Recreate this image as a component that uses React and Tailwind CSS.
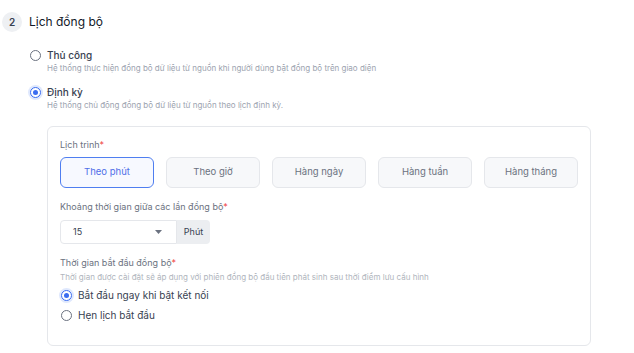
import React from 'react';

function Radio({ checked }) {
    return checked ? (
        <span className="w-[11px] h-[11px] rounded-full border border-[#3b6df0] bg-white flex items-center justify-center shadow-[0_0_0_2px_#dfe8fd] shrink-0">
            <span className="w-[5px] h-[5px] rounded-full bg-[#3b6df0]" />
        </span>
    ) : (
        <span className="w-[11px] h-[11px] rounded-full border border-[#6b7280] bg-white shrink-0" />
    );
}

const schedules = ['Theo phút', 'Theo giờ', 'Hàng ngày', 'Hàng tuần', 'Hàng tháng'];

export default function App() {
    return (
        <div className="w-[634px] h-[353px] bg-white overflow-hidden text-[#1f2937]" style={{ fontFamily: 'Inter, "Open Sans", sans-serif' }}>
            <div className="flex items-center pl-[2px] pt-[12px]">
                <div className="w-5 h-5 rounded-full bg-[#eef0f3] flex items-center justify-center text-[10px] font-semibold text-[#374151]">2</div>
                <div className="ml-[7px] text-[12px] leading-[20px] text-[#111827]">Lịch đồng bộ</div>
            </div>

            <div className="pl-[30px] mt-[17px] flex flex-col gap-[12px]">
                <div>
                    <div className="flex items-center gap-[6px] h-[12px]">
                        <Radio />
                        <span className="text-[10px] leading-[12px] font-medium text-[#374151]">Thủ công</span>
                    </div>
                    <div className="pl-[17px] mt-[1px] text-[8px] leading-[12px] text-[#9ca3af]">Hệ thống thực hiện đồng bộ dữ liệu từ nguồn khi người dùng bật đồng bộ trên giao diện</div>
                </div>
                <div>
                    <div className="flex items-center gap-[6px] h-[12px]">
                        <Radio checked />
                        <span className="text-[10px] leading-[12px] font-medium text-[#374151]">Định kỳ</span>
                    </div>
                    <div className="pl-[17px] mt-[1px] text-[8px] leading-[12px] text-[#9ca3af]">Hệ thống chủ động đồng bộ dữ liệu từ nguồn theo lịch định kỳ.</div>
                </div>
            </div>

            <div className="ml-[47px] mt-[15px] w-[544px] h-[220px] border border-[#e5e7eb] rounded-[6px] px-[12px] pt-[12px]">
                <div className="text-[9px] leading-[12px] text-[#6b7280]">Lịch trình<span className="text-[#ef4444]">*</span></div>
                <div className="mt-[6px] flex gap-[12px]">
                    {schedules.map((s, i) => (
                        <div
                            key={s}
                            className={i === 0
                                ? 'w-[94px] h-[31px] rounded-[6px] border border-[#4f7ef0] bg-[#f7f9ff] flex items-center justify-center text-[9.5px] text-[#4f6ee8]'
                                : 'w-[94px] h-[31px] rounded-[6px] border border-[#e5e7eb] bg-[#f7f8fa] flex items-center justify-center text-[9.5px] text-[#6b7280]'}
                        >
                            {s}
                        </div>
                    ))}
                </div>

                <div className="mt-[13px] text-[9px] leading-[12px] text-[#6b7280]">Khoảng thời gian giữa các lần đồng bộ<span className="text-[#ef4444]">*</span></div>
                <div className="mt-[7px] flex h-[24px] w-[150px]">
                    <div className="w-[117px] border border-[#e5e7eb] rounded-l-[4px] flex items-center justify-between pl-[12px] pr-[14px] text-[9px] text-[#374151]">
                        <span>15</span>
                        <svg width="7" height="4" viewBox="0 0 7 4"><path d="M0 0h7L3.5 4z" fill="#6b7280" /></svg>
                    </div>
                    <div className="w-[33px] bg-[#eceef1] rounded-r-[4px] flex items-center justify-center text-[9px] text-[#374151]">Phút</div>
                </div>

                <div className="mt-[13px] text-[9px] leading-[12px] text-[#6b7280]">Thời gian bắt đầu đồng bộ<span className="text-[#ef4444]">*</span></div>
                <div className="mt-[2px] text-[8px] leading-[12px] text-[#b0b5bd]">Thời gian được cài đặt sẽ áp dụng với phiên đồng bộ đầu tiên phát sinh sau thời điểm lưu cấu hình</div>
                <div className="mt-[6px] flex flex-col gap-[8px] pl-[1px]">
                    <div className="flex items-center gap-[6px] h-[12px]">
                        <Radio checked />
                        <span className="text-[10px] leading-[12px] text-[#374151]">Bắt đầu ngay khi bật kết nối</span>
                    </div>
                    <div className="flex items-center gap-[6px] h-[12px]">
                        <Radio />
                        <span className="text-[10px] leading-[12px] text-[#374151]">Hẹn lịch bắt đầu</span>
                    </div>
                </div>
            </div>
        </div>
    );
}
